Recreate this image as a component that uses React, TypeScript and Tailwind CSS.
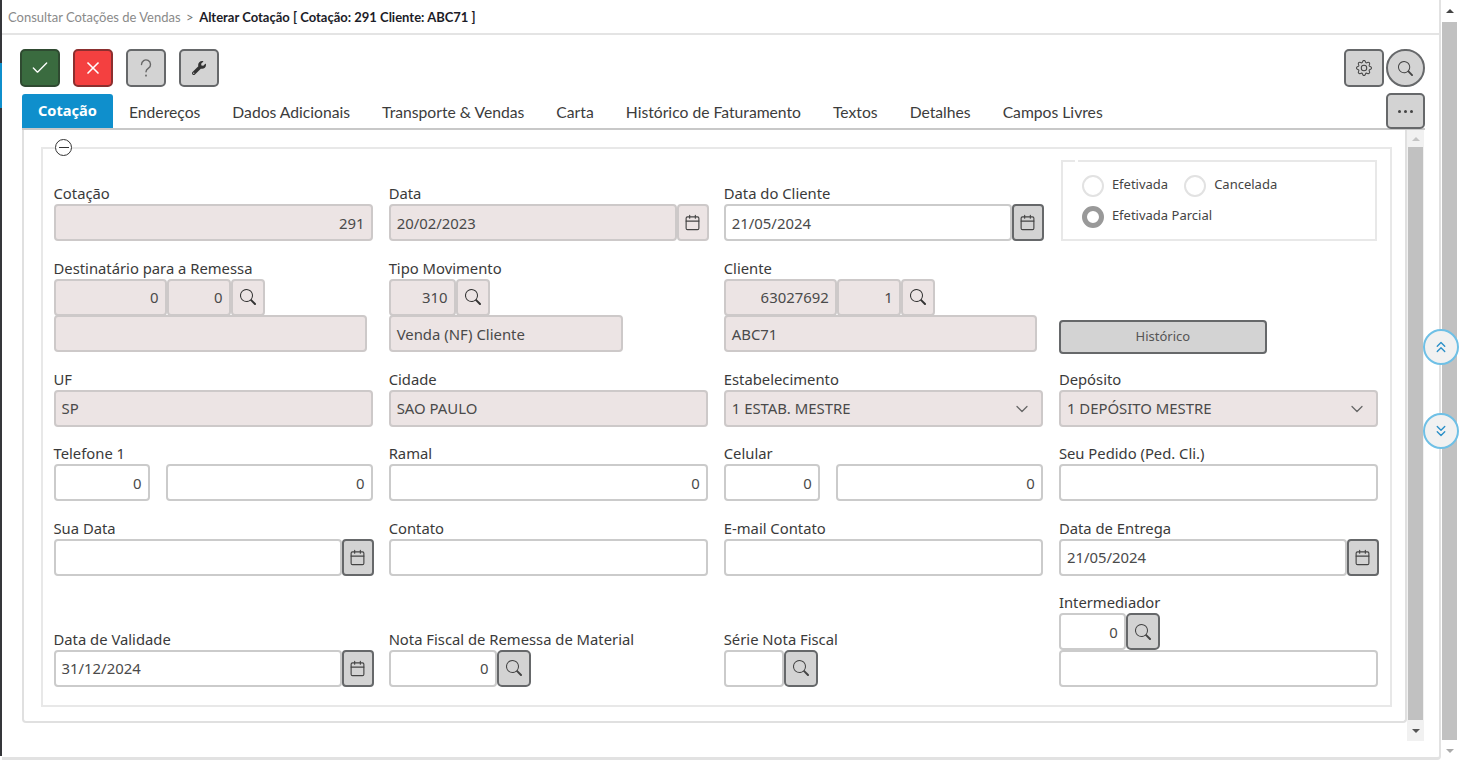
import { ReactNode } from "react";
import { Calendar, Check, ChevronDown, ChevronsDown, ChevronsUp, X } from "lucide-react";
import { BsGear, BsSearch } from "react-icons/bs";
import { FaWrench } from "react-icons/fa";

const BTN = "flex shrink-0 items-center justify-center rounded-[5px] border-2";
const GREY = "border-[#66686a] bg-[#d3d3d3] text-[#444]";

const Box = ({ value = "", right, ro, className = "" }: { value?: string; right?: boolean; ro?: boolean; className?: string }) => (
    <div
        className={`flex h-[37px] min-w-0 items-center rounded-[4px] border-2 px-[6px] pt-[1px] text-[14.9px] text-[#4a4a4a] ${
            right ? "justify-end" : ""
        } ${ro ? "border-[#cdc9c9] bg-[#ece4e4]" : "border-[#cbcbcb] bg-white"} ${className}`}
    >
        {value}
    </div>
);

const Lookup = ({ ro }: { ro?: boolean }) =>
    ro ? (
        <div className="flex h-[37px] w-[34px] shrink-0 items-center justify-center rounded-[4px] border-2 border-[#cdc9c9] bg-[#ece4e4] text-[#333]">
            <BsSearch size={16} />
        </div>
    ) : (
        <div className={`${BTN} ${GREY} h-[37px] w-[34px]`}>
            <BsSearch size={16} />
        </div>
    );

const Field = ({ label, children, className = "" }: { label?: string; children: ReactNode; className?: string }) => (
    <div className={`flex min-w-0 flex-col justify-end ${className}`}>
        {label && <div className="h-[18px] text-[14.8px] leading-[15px] text-[#3a3a3a]">{label}</div>}
        {children}
    </div>
);

const DateBox = ({ value = "", ro, grey }: { value?: string; ro?: boolean; grey?: boolean }) => (
    <div className="flex w-[320px]">
        <Box value={value} ro={ro} className="flex-1" />
        <div
            className={`flex h-[37px] w-[32px] shrink-0 items-center justify-center rounded-[4px] border-2 text-[#444] ${
                grey ? "border-[#66686a] bg-[#d3d3d3]" : "border-[#cdc9c9] bg-[#ece4e4]"
            }`}
        >
            <Calendar size={17} strokeWidth={1.6} />
        </div>
    </div>
);

const Combo = ({ value }: { value: string }) => (
    <div className="flex h-[37px] items-center justify-between rounded-[4px] border-2 border-[#cdc9c9] bg-[#ece4e4] pl-[6px] pr-[9px] pt-[1px] text-[14.9px] text-[#4a4a4a]">
        {value}
        <ChevronDown size={20} strokeWidth={1.5} className="text-[#666]" />
    </div>
);

const Radio = ({ label, on }: { label: string; on?: boolean }) => (
    <div className="flex items-center gap-[8px] text-[13px] text-[#444]">
        <span className={`h-[22px] w-[22px] rounded-full ${on ? "border-[5px] border-[#999]" : "border-2 border-[#e2e2e2]"}`} />
        <span className="-mt-[3px]">{label}</span>
    </div>
);

const Scrollbar = ({
    className = "",
    top = "h-[17px]",
    up = "#555",
    down = "#555",
}: {
    className?: string;
    top?: string;
    up?: string;
    down?: string;
}) => (
    <div className={`flex flex-col ${className}`}>
        <div className={`flex shrink-0 items-center justify-center ${top}`}>
            <span className="h-0 w-0 border-x-[4px] border-b-[4px] border-x-transparent" style={{ borderBottomColor: up }} />
        </div>
        <div className="mx-[1px] flex-1 bg-[#c1c1c1]" />
        <div className="flex h-[21px] shrink-0 items-center justify-center">
            <span className="h-0 w-0 border-x-[4px] border-t-[4px] border-x-transparent" style={{ borderTopColor: down }} />
        </div>
    </div>
);

const tabs = ["Endereços", "Dados Adicionais", "Transporte & Vendas", "Carta", "Histórico de Faturamento", "Textos", "Detalhes", "Campos Livres"];

export default function App() {
    return (
        <div className="relative flex h-[761px] w-[1459px] overflow-hidden bg-white font-['Noto_Sans',sans-serif]">
            {/* sliver of the side menu */}
            <div className="mb-[5px] flex w-[2px] shrink-0 flex-col bg-[#35363a]">
                <div className="mt-[63px] h-[45px] bg-[#0f8fcc]" />
            </div>

            <div className="mb-[1px] flex w-[1439px] shrink-0 flex-col rounded-br-[4px] border-b-[3px] border-r-2 border-[#e2e2e2]">
                <div className="flex h-[35px] shrink-0 items-center gap-[5.5px] border-b-2 border-[#e4e4e4] pl-[6px] pt-[2px] font-['Lato',sans-serif] text-[13px]">
                    <span className="text-[#8a8a8a]">Consultar Cotações de Vendas</span>
                    <span className="text-[#777]">&gt;</span>
                    <span className="font-bold text-[#1c1c28]">Alterar Cotação [ Cotação: 291 Cliente: ABC71 ]</span>
                </div>

                <div className="flex shrink-0 pl-[18px] pr-[14px] pt-[14px]">
                    <div className={`${BTN} h-[38px] w-[40px] border-[#2f4a31] bg-[#3a6b3f] text-white`}>
                        <Check size={20} strokeWidth={1.6} />
                    </div>
                    <div className={`${BTN} ml-[13px] h-[38px] w-[40px] border-[#8b2f2f] bg-[#f44040] text-white`}>
                        <X size={20} strokeWidth={2} />
                    </div>
                    <div className={`${BTN} ${GREY} ml-[13px] h-[38px] w-[40px]`}>
                        <svg width="20" height="24" viewBox="0 0 20 24" fill="none" stroke="#666" strokeWidth="1.4" strokeLinecap="round">
                            <path d="M5.5 8.5a4.5 4.5 0 1 1 7 3.7c-1.5 1-2.5 1.8-2.5 3.6" />
                            <path d="M10 19.5v.2" strokeWidth="1.8" />
                        </svg>
                    </div>
                    <div className={`${BTN} ${GREY} ml-[13px] h-[38px] w-[40px]`}>
                        <FaWrench size={14} className="text-[#333]" />
                    </div>
                    <div className={`${BTN} ${GREY} ml-auto h-[38px] w-[40px]`}>
                        <BsGear size={16} />
                    </div>
                    <div className={`${BTN} ${GREY} ml-[2px] h-[38px] w-[39px] !rounded-full`}>
                        <BsSearch size={15} />
                    </div>
                </div>

                <div className="ml-[20px] mr-[14px] mt-[7px] flex h-[36px] shrink-0 items-start border-b-2 border-[#c8c8c8]">
                    <div className="flex h-[34px] items-center rounded-t-[3px] bg-[#0f8fcc] px-[16px] text-[14.6px] font-bold text-white">Cotação</div>
                    {tabs.map((t) => (
                        <div key={t} className="flex h-[34px] items-center px-[16px] pt-[3px] font-['Lato',sans-serif] text-[15.7px] text-[#3c3c3c]">
                            {t}
                        </div>
                    ))}
                    <div className={`${BTN} ${GREY} -mt-[1px] ml-auto h-[36px] w-[39px] gap-[3px]`}>
                        <span className="h-[3px] w-[3px] rounded-full bg-[#444]" />
                        <span className="h-[3px] w-[3px] rounded-full bg-[#444]" />
                        <span className="h-[3px] w-[3px] rounded-full bg-[#444]" />
                    </div>
                </div>

                <div className="flex min-h-0 flex-1 pb-[16px] pl-[20px] pr-[15px]">
                    <div className="mb-[18px] flex-1 rounded-b-[4px] border-x-2 border-b-2 border-[#e0e0e0] pb-[14px] pl-[17px] pr-[13px] pt-[17px]">
                        <div className="relative h-[560px] border-2 border-[#e8e8e8] pl-[10.5px] pr-[12px] pt-[37px]">
                            <span className="absolute -top-[10px] left-[12px] flex h-[17px] w-[17px] items-center justify-center rounded-full border-[1.5px] border-[#333] bg-white">
                                <span className="h-[1.5px] w-[10px] bg-[#333]" />
                            </span>
                            <div className="grid grid-cols-4 gap-x-[16px] gap-y-[19.5px]">
                                <Field label="Cotação">
                                    <Box value="291" right ro />
                                </Field>
                                <Field label="Data">
                                    <DateBox value="20/02/2023" ro />
                                </Field>
                                <Field label="Data do Cliente">
                                    <DateBox value="21/05/2024" grey />
                                </Field>
                                <div className="relative ml-[2px] -mt-[26px] mr-[1px] flex h-[81px] flex-col gap-[9px] border-2 border-[#e8e8e8] pl-[19px] pt-[13px]">
                                    <span className="absolute -top-[2px] left-[12px] h-[2px] w-[3px] bg-white" />
                                    <div className="flex gap-[16px]">
                                        <Radio label="Efetivada" />
                                        <Radio label="Cancelada" />
                                    </div>
                                    <Radio label="Efetivada Parcial" on />
                                </div>

                                <Field label="Destinatário para a Remessa">
                                    <div className="flex">
                                        <Box value="0" right ro className="w-[113px]" />
                                        <Box value="0" right ro className="w-[64px]" />
                                        <Lookup ro />
                                    </div>
                                    <Box ro className="-mt-[0.5px] w-[313px]" />
                                </Field>
                                <Field label="Tipo Movimento">
                                    <div className="flex">
                                        <Box value="310" right ro className="w-[67px]" />
                                        <Lookup ro />
                                    </div>
                                    <Box value="Venda (NF) Cliente" ro className="-mt-[0.5px] w-[234px]" />
                                </Field>
                                <Field label="Cliente">
                                    <div className="flex">
                                        <Box value="63027692" right ro className="w-[113px]" />
                                        <Box value="1" right ro className="w-[64px]" />
                                        <Lookup ro />
                                    </div>
                                    <Box value="ABC71" ro className="-mt-[0.5px] w-[313px]" />
                                </Field>
                                <Field>
                                    <div className="-mb-[2px] flex h-[34px] w-[208px] items-center justify-center rounded-[4px] border-2 border-[#66686a] bg-[#d3d3d3] text-[13px] text-[#555]">
                                        Histórico
                                    </div>
                                </Field>

                                <Field label="UF">
                                    <Box value="SP" ro />
                                </Field>
                                <Field label="Cidade">
                                    <Box value="SAO PAULO" ro />
                                </Field>
                                <Field label="Estabelecimento">
                                    <Combo value="1 ESTAB. MESTRE" />
                                </Field>
                                <Field label="Depósito">
                                    <Combo value="1 DEPÓSITO MESTRE" />
                                </Field>

                                <Field label="Telefone 1">
                                    <div className="flex gap-[16px]">
                                        <Box value="0" right className="w-[96px]" />
                                        <Box value="0" right className="flex-1" />
                                    </div>
                                </Field>
                                <Field label="Ramal">
                                    <Box value="0" right />
                                </Field>
                                <Field label="Celular">
                                    <div className="flex gap-[16px]">
                                        <Box value="0" right className="w-[96px]" />
                                        <Box value="0" right className="flex-1" />
                                    </div>
                                </Field>
                                <Field label="Seu Pedido (Ped. Cli.)">
                                    <Box />
                                </Field>

                                <Field label="Sua Data">
                                    <DateBox grey />
                                </Field>
                                <Field label="Contato">
                                    <Box />
                                </Field>
                                <Field label="E-mail Contato">
                                    <Box />
                                </Field>
                                <Field label="Data de Entrega">
                                    <DateBox value="21/05/2024" grey />
                                </Field>

                                <Field label="Data de Validade">
                                    <DateBox value="31/12/2024" grey />
                                </Field>
                                <Field label="Nota Fiscal de Remessa de Material">
                                    <div className="flex">
                                        <Box value="0" right className="w-[108px]" />
                                        <Lookup />
                                    </div>
                                </Field>
                                <Field label="Série Nota Fiscal">
                                    <div className="flex">
                                        <Box className="w-[60px]" />
                                        <Lookup />
                                    </div>
                                </Field>
                                <Field label="Intermediador">
                                    <div className="flex">
                                        <Box value="0" right className="w-[67px]" />
                                        <Lookup />
                                    </div>
                                    <Box className="-mt-[0.5px]" />
                                </Field>
                            </div>
                        </div>
                    </div>
                    <Scrollbar className="w-[17px] bg-[#f1f1f1]" up="#c4c4c4" />
                </div>
            </div>

            <Scrollbar className="w-[17px] bg-white" top="h-[22px]" up="#444" down="#aaa" />

            <div className="absolute left-[1423px] top-[329px] flex h-[36px] w-[36px] items-center justify-center rounded-full border-2 border-[#6fc0e6] bg-[#f1f1f1] text-[#2a8fc8]">
                <ChevronsUp size={18} strokeWidth={1.8} />
            </div>
            <div className="absolute left-[1423px] top-[413px] flex h-[36px] w-[36px] items-center justify-center rounded-full border-2 border-[#6fc0e6] bg-[#f1f1f1] text-[#2a8fc8]">
                <ChevronsDown size={18} strokeWidth={1.8} />
            </div>
        </div>
    );
}
